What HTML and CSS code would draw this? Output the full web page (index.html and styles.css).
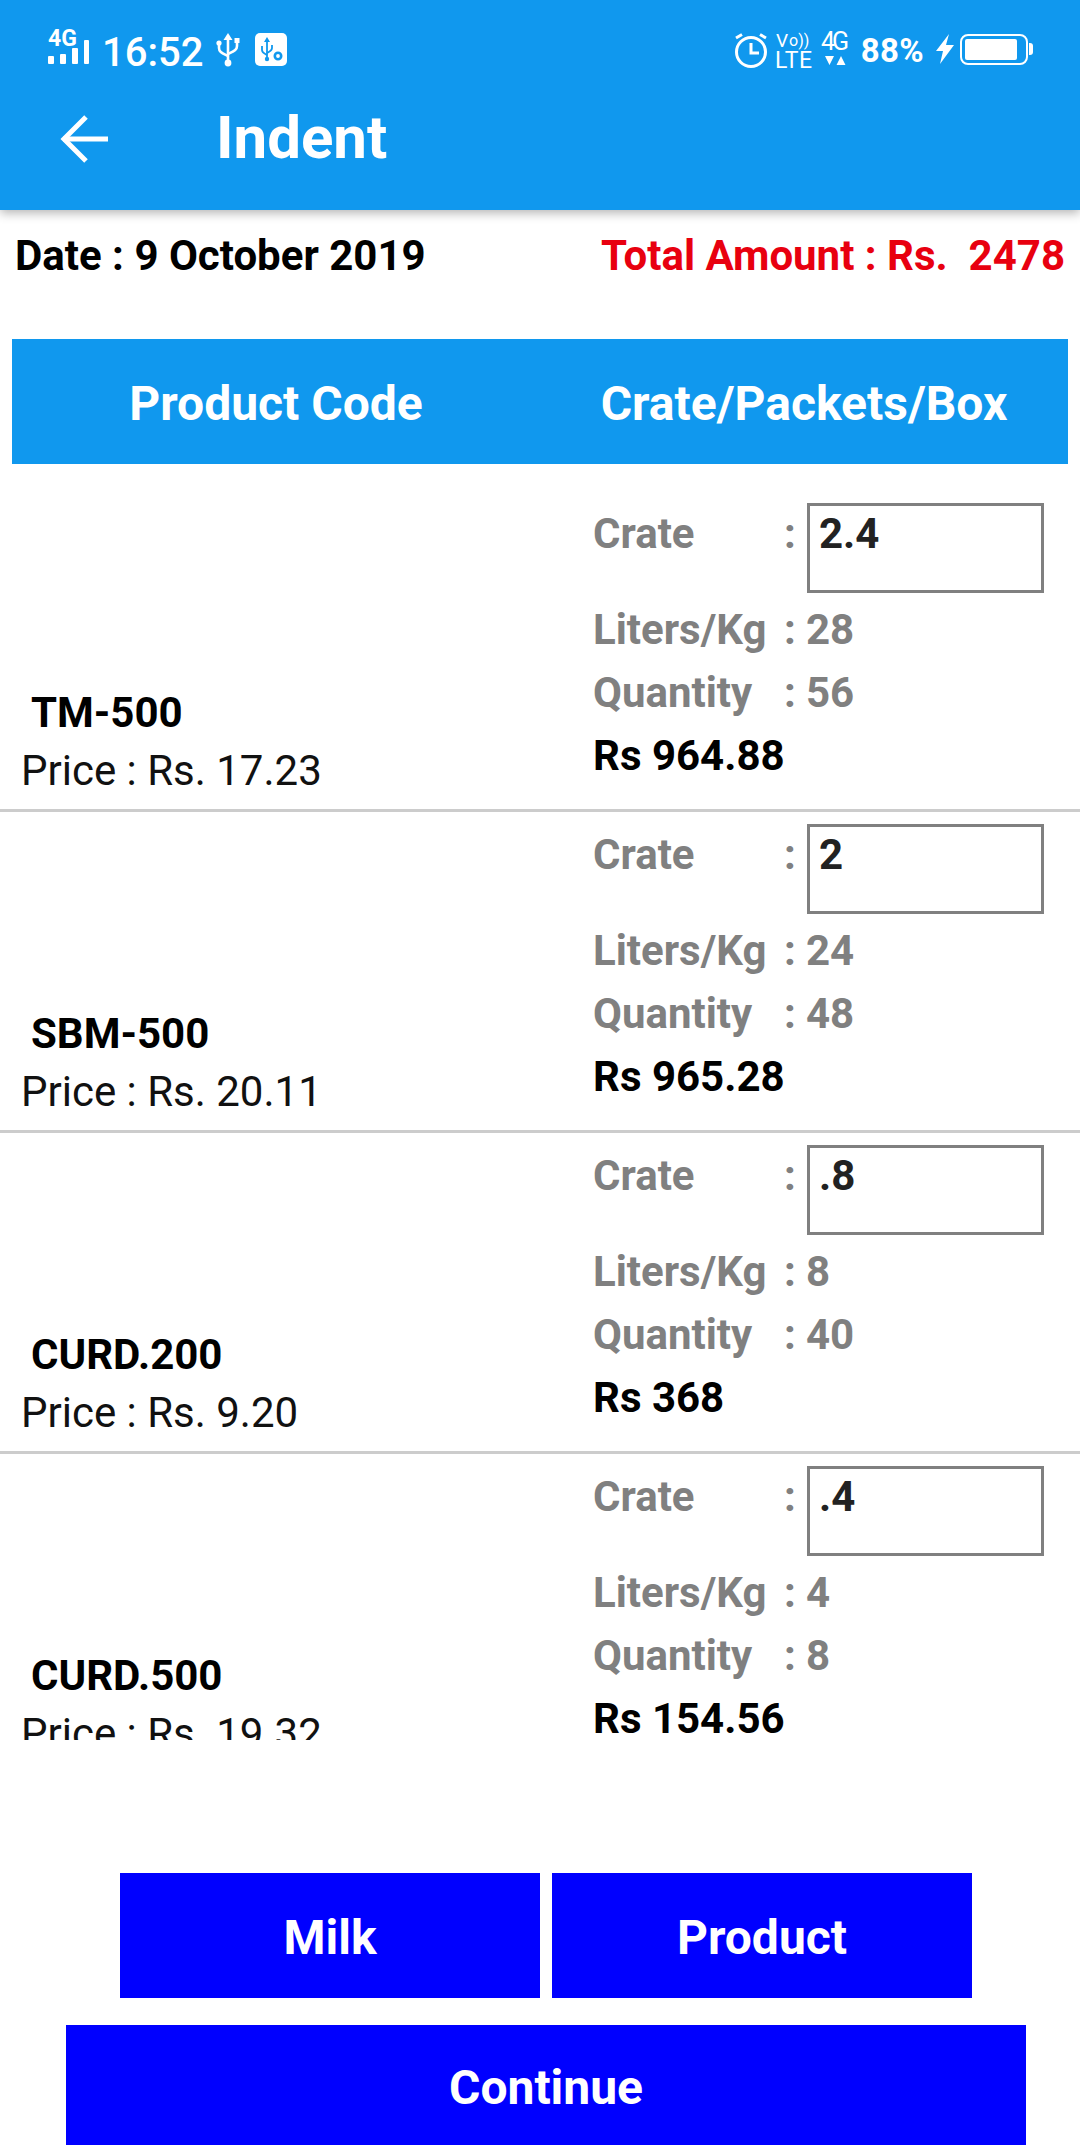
FILE: index.html
```html
<!DOCTYPE html>
<html lang="en">
<head>
<meta charset="utf-8">
<title>Indent</title>
<link rel="stylesheet" href="styles.css">
</head>
<body>
<div class="page">
  <header class="appbar">
    <div class="status">
      <div class="status-left">
        <svg class="ic-signal" width="44" height="42" viewBox="0 -6 44 42">
          <text x="0" y="17" class="ic-text" font-size="23">4G</text>
          <rect x="0" y="27" width="6" height="8" rx="1"/>
          <rect x="12" y="25" width="6" height="10" rx="1"/>
          <rect x="24" y="19" width="6" height="16" rx="1"/>
          <rect x="36" y="11" width="5" height="24" rx="1"/>
        </svg>
        <span class="clock">16:52</span>
        <svg class="ic-usb" width="24" height="34" viewBox="0 0 24 34" fill="none" stroke="#fff" stroke-width="2.6">
          <path d="M12 5V29"/>
          <path d="M12 0L16.500 7H7.500Z" fill="#fff" stroke="none"/>
          <circle cx="12" cy="30" r="3.400" fill="#fff" stroke="none"/>
          <path d="M3 11V15C3 19 6 20 12 23"/>
          <path d="M21 9V13C21 17 18 18 12 21"/>
          <circle cx="3" cy="10" r="2.600" fill="#fff" stroke="none"/>
          <rect x="18.500" y="5" width="5" height="5" fill="#fff" stroke="none"/>
        </svg>
        <svg class="ic-badge" width="32" height="33" viewBox="0 0 32 33">
          <rect width="32" height="33" rx="5" fill="#fff"/>
          <g fill="none" stroke="#1098ee" stroke-width="1.800">
            <path d="M12 8V26"/>
            <path d="M7 13V17C7 20 9 20 12 22"/>
            <path d="M17 12V15C17 18 15 18 12 20"/>
            <circle cx="23" cy="23" r="3.200" stroke-width="2.600"/>
          </g>
          <path d="M12 4L15 9H9Z" fill="#1098ee"/>
          <circle cx="12" cy="26" r="2.200" fill="#1098ee"/>
        </svg>
      </div>
      <div class="status-right">
        <svg class="ic-alarm" width="34" height="36" viewBox="0 0 34 36" fill="none" stroke="#fff" stroke-width="3">
          <circle cx="17" cy="20" r="14.500"/>
          <path d="M17 11V21H25"/>
          <path d="M2 6L8 2.500M32 6L26 2.500"/>
        </svg>
        <svg class="ic-volte" width="38" height="48" viewBox="0 -4 38 48">
          <text x="1" y="16" class="ic-thin" font-size="19">V</text>
          <text x="14" y="15" class="ic-thin" font-size="16">o))</text>
          <text x="0" y="37" class="ic-thin" font-size="23" textLength="37">LTE</text>
        </svg>
        <svg class="ic-4g" width="28" height="41" viewBox="0 -5 28 41">
          <text x="0" y="18" class="ic-thin" font-size="25" textLength="28">4G</text>
          <path d="M4 24H13L8.500 33ZM15.500 33L20 24L24.500 33Z"/>
        </svg>
        <span class="battery-pct">88%</span>
        <svg class="ic-bolt" width="18" height="30" viewBox="0 0 18 30">
          <path d="M13 0L0 17H7L4 30L18 11H10Z"/>
        </svg>
        <span class="battery"><span class="battery-fill"></span></span>
      </div>
    </div>
    <div class="toolbar">
      <svg class="ic-back" width="48" height="48" viewBox="0 0 48 48" fill="none" stroke="#fff" stroke-width="5">
        <path d="M3 24H48"/>
        <path d="M26 2L4 24L26 46"/>
      </svg>
      <h1 class="title">Indent</h1>
    </div>
  </header>

  <div class="summary">
    <span class="date">Date : 9 October 2019</span>
    <span class="total">Total Amount : Rs.  2478</span>
  </div>

  <div class="thead">
    <div class="th">Product Code</div>
    <div class="th">Crate/Packets/Box</div>
  </div>

  <div class="list">
    <div class="row">
      <div class="product">
        <div class="code">TM-500</div>
        <div class="price">Price : Rs. 17.23</div>
      </div>
      <div class="detail">
        <div class="line crate"><span class="label">Crate</span><span class="colon">:</span><div class="field">2.4</div></div>
        <div class="line"><span class="label">Liters/Kg</span><span class="colon">:</span><span class="val">28</span></div>
        <div class="line"><span class="label">Quantity</span><span class="colon">:</span><span class="val">56</span></div>
        <div class="amount">Rs 964.88</div>
      </div>
    </div>
    <div class="row">
      <div class="product">
        <div class="code">SBM-500</div>
        <div class="price">Price : Rs. 20.11</div>
      </div>
      <div class="detail">
        <div class="line crate"><span class="label">Crate</span><span class="colon">:</span><div class="field">2</div></div>
        <div class="line"><span class="label">Liters/Kg</span><span class="colon">:</span><span class="val">24</span></div>
        <div class="line"><span class="label">Quantity</span><span class="colon">:</span><span class="val">48</span></div>
        <div class="amount">Rs 965.28</div>
      </div>
    </div>
    <div class="row">
      <div class="product">
        <div class="code">CURD.200</div>
        <div class="price">Price : Rs. 9.20</div>
      </div>
      <div class="detail">
        <div class="line crate"><span class="label">Crate</span><span class="colon">:</span><div class="field">.8</div></div>
        <div class="line"><span class="label">Liters/Kg</span><span class="colon">:</span><span class="val">8</span></div>
        <div class="line"><span class="label">Quantity</span><span class="colon">:</span><span class="val">40</span></div>
        <div class="amount">Rs 368</div>
      </div>
    </div>
    <div class="row">
      <div class="product">
        <div class="code">CURD.500</div>
        <div class="price">Price : Rs. 19.32</div>
      </div>
      <div class="detail">
        <div class="line crate"><span class="label">Crate</span><span class="colon">:</span><div class="field">.4</div></div>
        <div class="line"><span class="label">Liters/Kg</span><span class="colon">:</span><span class="val">4</span></div>
        <div class="line"><span class="label">Quantity</span><span class="colon">:</span><span class="val">8</span></div>
        <div class="amount">Rs 154.56</div>
      </div>
    </div>
  </div>

  <div class="actions">
    <div class="pair">
      <button class="btn btn-half">Milk</button>
      <button class="btn btn-half">Product</button>
    </div>
    <button class="btn btn-wide">Continue</button>
  </div>
</div>
</body>
</html>
```
FILE: styles.css
```css
* { box-sizing: border-box; }
html, body { margin: 0; padding: 0; background: #fff; }
body { font-family: Roboto, "Liberation Sans", sans-serif; }
.page { width: 1080px; height: 2156px; overflow: hidden; display: flex; flex-direction: column; }

.appbar { height: 210px; background: #1098ee; box-shadow: 0 3px 10px rgba(0,0,0,.3); color: #fff; flex: none; position: relative; }
.status { height: 100px; padding: 29px 52px 0 48px; display: flex; justify-content: space-between; align-items: flex-start; }
.status-left, .status-right { display: flex; align-items: flex-start; }
.status svg { display: block; }
.ic-signal, .ic-volte, .ic-4g, .ic-bolt { fill: #fff; }
.ic-text { font-family: Roboto, sans-serif; font-weight: 700; }
.ic-thin { font-family: Roboto, sans-serif; font-weight: 400; }
.ic-signal { margin-top: -6px; }
.clock { font-size: 40px; font-weight: 500; line-height: 47px; margin-left: 10px; }
.ic-usb { margin: 4px 0 0 13px; }
.ic-badge { margin: 4px 0 0 15px; }
.ic-alarm { margin: 3px 0 0 0; }
.ic-volte { margin: -2px 0 0 7px; }
.ic-4g { margin: -2px 0 0 8px; }
.battery-pct { font-size: 33px; font-weight: 700; line-height: 39px; margin: 2px 0 0 12px; letter-spacing: .3px; }
.ic-bolt { margin: 5px 0 0 12px; }
.battery { width: 68px; height: 31px; margin: 5px 0 0 6px; border: 2.500px solid #fff; border-radius: 8px; padding: 3px; display: block; position: relative; }
.battery::after { content: ""; position: absolute; right: -7px; top: 7px; width: 4px; height: 12px; background: #fff; border-radius: 0 3px 3px 0; }
.battery-fill { display: block; width: 90%; height: 100%; background: #fff; border-radius: 2px; }

.toolbar { height: 110px; padding-left: 60px; display: flex; align-items: flex-start; }
.ic-back { margin-top: 15px; flex: none; }
.title { margin: 3px 0 0 108px; font-size: 60px; font-weight: 700; line-height: 70px; color: #fff; }

.summary { margin-top: 7px; height: 122px; padding: 14px 15px 0 15px; display: flex; justify-content: space-between; font-size: 42px; font-weight: 700; line-height: 49px; white-space: pre; flex: none; }
.date { color: #000; }
.total { color: #e8000f; }

.thead { margin: 0 12px; height: 125px; padding-top: 4px; background: #1098ee; display: grid; grid-template-columns: 1fr 1fr; align-items: center; flex: none; }
.th { color: #fff; font-size: 48px; font-weight: 700; text-align: center; line-height: 56px; }

.list { height: 1276px; overflow: hidden; padding-top: 27px; flex: none; }
.row { height: 321px; padding: 12px 0 9px; border-bottom: 3px solid #ccc; display: grid; grid-template-columns: 593px 1fr; }
.product { align-self: end; }
.code { padding-left: 31px; font-size: 42px; font-weight: 700; line-height: 58px; color: #000; }
.price { padding-left: 21px; font-size: 42px; font-weight: 400; line-height: 58px; color: #111; }

.detail { font-size: 42px; font-weight: 700; line-height: 65px; color: #808080; }
.line { display: flex; height: 63px; }
.crate { height: 94px; line-height: 61px; }
.label { width: 191px; flex: none; }
.colon { width: 22px; flex: none; }
.crate .colon { width: 23px; }
.field { width: 237px; height: 90px; border: 3px solid #808080; padding: 3px 0 0 9px; color: #222; line-height: 49px; }
.amount { color: #000; }

.actions { margin-top: 133px; padding-left: 12px; display: flex; flex-direction: column; align-items: center; gap: 27px; }
.pair { display: flex; gap: 12px; }
.btn { border: 0; background: #0000ff; color: #fff; font-family: Roboto, sans-serif; font-size: 48px; font-weight: 700; padding: 4px 0 0; }
.btn-half { width: 420px; height: 125px; }
.btn-wide { width: 960px; height: 120px; }
```
